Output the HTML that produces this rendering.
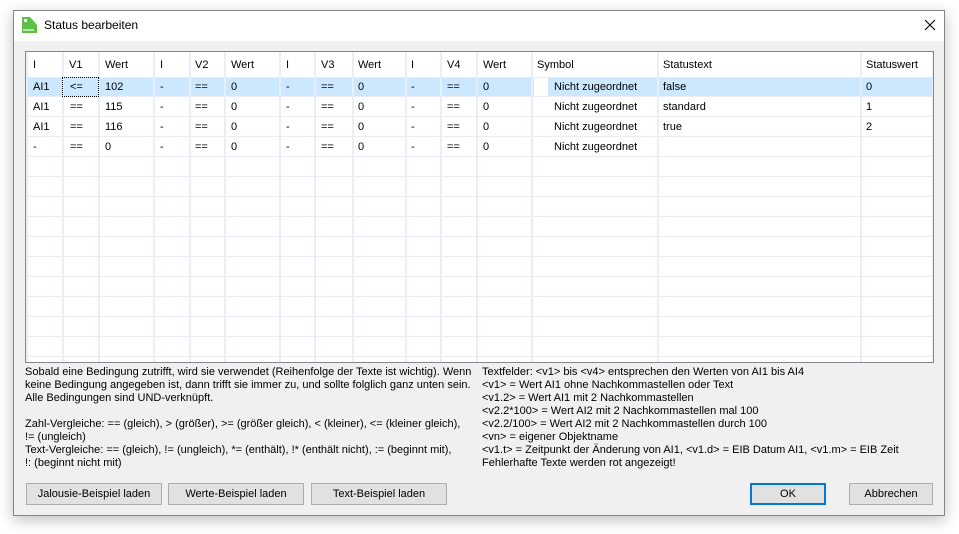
<!DOCTYPE html>
<html><head><meta charset="utf-8"><style>
*{margin:0;padding:0;box-sizing:border-box}
body{width:959px;height:534px;background:#fff;position:relative;overflow:hidden;font-family:"Liberation Sans",sans-serif;font-size:11px;color:#000}
.win{position:absolute;left:13px;top:10px;width:932px;height:506px;background:#f0f0f0;border:1px solid #868686;box-shadow:0 4px 14px rgba(0,0,0,.25)}
.title{position:absolute;left:0;top:0;width:930px;height:30px;background:#fff}
.title span{position:absolute;left:30px;top:7px;font-size:12px}
.grid{position:absolute;left:11px;top:40px;width:909px;height:312px;border:1px solid #828790;background:#fff;overflow:hidden}
.h{position:absolute;left:1px;right:0;height:1px;background:#eaeef4}
.v{position:absolute;top:0;bottom:0;width:2px;background:#e9eff8}
.sel{position:absolute;left:1px;width:906px;top:25px;height:19px;background:#cce8ff}
.t{position:absolute;white-space:nowrap;line-height:13px}
.btn{position:absolute;top:472px;height:22px;background:#e1e1e1;border:1px solid #adadad;text-align:center;line-height:20px}
.txt{position:absolute;line-height:13px;white-space:nowrap}
</style></head><body>
<div class="win">
<div class="title">
<svg style="position:absolute;left:8px;top:6px" width="15" height="16" viewBox="0 0 15 16"><path d="M0 0H8L15 8V16H0Z" fill="#5dbf46"/><rect x="2" y="2" width="3" height="3" fill="#fff"/><rect x="1" y="12" width="11" height="2" fill="#b8e3ae"/></svg>
<span>Status bearbeiten</span>
<svg style="position:absolute;left:910px;top:8px" width="12" height="12" viewBox="0 0 12 12"><path d="M1 1L11 11M11 1L1 11" stroke="#000" stroke-width="1.1"/></svg>
</div>
<div class="grid" id="g">
<div class="sel"></div>
<div class="h" style="top:25px"></div><div class="h" style="top:44px"></div><div class="h" style="top:64px"></div><div class="h" style="top:84px"></div><div class="h" style="top:104px"></div><div class="h" style="top:124px"></div><div class="h" style="top:144px"></div><div class="h" style="top:164px"></div><div class="h" style="top:184px"></div><div class="h" style="top:204px"></div><div class="h" style="top:224px"></div><div class="h" style="top:244px"></div><div class="h" style="top:264px"></div><div class="h" style="top:284px"></div><div class="h" style="top:304px"></div>
<div class="v" style="left:0"></div><div class="v" style="left:36px"></div><div class="v" style="left:72px"></div><div class="v" style="left:127px"></div><div class="v" style="left:163px"></div><div class="v" style="left:198px"></div><div class="v" style="left:253px"></div><div class="v" style="left:288px"></div><div class="v" style="left:326px"></div><div class="v" style="left:379px"></div><div class="v" style="left:414px"></div><div class="v" style="left:450px"></div><div class="v" style="left:505px"></div><div class="v" style="left:631px"></div><div class="v" style="left:834px"></div><div class="v" style="left:906px"></div>
<div style="position:absolute;left:508px;top:26px;width:14px;height:18px;background:#fff"></div>
<div style="position:absolute;left:36px;top:25px;width:37px;height:20px;border:1px dotted #000"></div>
</div>
<div class="txt" style="left:11px;top:355px">Sobald eine Bedingung zutrifft, wird sie verwendet (Reihenfolge der Texte ist wichtig). Wenn<br>keine Bedingung angegeben ist, dann trifft sie immer zu, und sollte folglich ganz unten sein.<br>Alle Bedingungen sind UND-verknüpft.<br><br>Zahl-Vergleiche: == (gleich), &gt; (größer), &gt;= (größer gleich), &lt; (kleiner), &lt;= (kleiner gleich),<br>!= (ungleich)<br>Text-Vergleiche: == (gleich), != (ungleich), *= (enthält), !* (enthält nicht), := (beginnt mit),<br>!: (beginnt nicht mit)</div>
<div class="txt" style="left:468px;top:355px">Textfelder: &lt;v1&gt; bis &lt;v4&gt; entsprechen den Werten von AI1 bis AI4<br>&lt;v1&gt; = Wert AI1 ohne Nachkommastellen oder Text<br>&lt;v1.2&gt; = Wert AI1 mit 2 Nachkommastellen<br>&lt;v2.2*100&gt; = Wert AI2 mit 2 Nachkommastellen mal 100<br>&lt;v2.2/100&gt; = Wert AI2 mit 2 Nachkommastellen durch 100<br>&lt;vn&gt; = eigener Objektname<br>&lt;v1.t&gt; = Zeitpunkt der Änderung von AI1, &lt;v1.d&gt; = EIB Datum AI1, &lt;v1.m&gt; = EIB Zeit<br>Fehlerhafte Texte werden rot angezeigt!</div>
<div class="btn" style="left:12px;width:136px">Jalousie-Beispiel laden</div>
<div class="btn" style="left:154px;width:136px">Werte-Beispiel laden</div>
<div class="btn" style="left:297px;width:136px">Text-Beispiel laden</div>
<div class="btn" style="left:736px;width:76px;border:2px solid #0078d7;line-height:18px">OK</div>
<div class="btn" style="left:835px;width:84px">Abbrechen</div>
</div>
<div style="position:absolute;left:0;top:0">
<div class="t" style="left:33px;top:59px">I</div><div class="t" style="left:69px;top:59px">V1</div><div class="t" style="left:105px;top:59px">Wert</div><div class="t" style="left:160px;top:59px">I</div><div class="t" style="left:195px;top:59px">V2</div><div class="t" style="left:231px;top:59px">Wert</div><div class="t" style="left:286px;top:59px">I</div><div class="t" style="left:321px;top:59px">V3</div><div class="t" style="left:358px;top:59px">Wert</div><div class="t" style="left:411px;top:59px">I</div><div class="t" style="left:447px;top:59px">V4</div><div class="t" style="left:483px;top:59px">Wert</div><div class="t" style="left:537px;top:59px">Symbol</div><div class="t" style="left:663px;top:59px">Statustext</div><div class="t" style="left:866px;top:59px">Statuswert</div>

<div class="t" style="left:33px;top:81px">AI1</div><div class="t" style="left:70px;top:81px">&lt;=</div><div class="t" style="left:105px;top:81px">102</div><div class="t" style="left:160px;top:81px">-</div><div class="t" style="left:195px;top:81px">==</div><div class="t" style="left:231px;top:81px">0</div><div class="t" style="left:286px;top:81px">-</div><div class="t" style="left:321px;top:81px">==</div><div class="t" style="left:358px;top:81px">0</div><div class="t" style="left:411px;top:81px">-</div><div class="t" style="left:447px;top:81px">==</div><div class="t" style="left:483px;top:81px">0</div><div class="t" style="left:554px;top:81px">Nicht zugeordnet</div><div class="t" style="left:663px;top:81px">false</div><div class="t" style="left:866px;top:81px">0</div>

<div class="t" style="left:33px;top:101px">AI1</div><div class="t" style="left:70px;top:101px">==</div><div class="t" style="left:105px;top:101px">115</div><div class="t" style="left:160px;top:101px">-</div><div class="t" style="left:195px;top:101px">==</div><div class="t" style="left:231px;top:101px">0</div><div class="t" style="left:286px;top:101px">-</div><div class="t" style="left:321px;top:101px">==</div><div class="t" style="left:358px;top:101px">0</div><div class="t" style="left:411px;top:101px">-</div><div class="t" style="left:447px;top:101px">==</div><div class="t" style="left:483px;top:101px">0</div><div class="t" style="left:554px;top:101px">Nicht zugeordnet</div><div class="t" style="left:663px;top:101px">standard</div><div class="t" style="left:866px;top:101px">1</div>

<div class="t" style="left:33px;top:121px">AI1</div><div class="t" style="left:70px;top:121px">==</div><div class="t" style="left:105px;top:121px">116</div><div class="t" style="left:160px;top:121px">-</div><div class="t" style="left:195px;top:121px">==</div><div class="t" style="left:231px;top:121px">0</div><div class="t" style="left:286px;top:121px">-</div><div class="t" style="left:321px;top:121px">==</div><div class="t" style="left:358px;top:121px">0</div><div class="t" style="left:411px;top:121px">-</div><div class="t" style="left:447px;top:121px">==</div><div class="t" style="left:483px;top:121px">0</div><div class="t" style="left:554px;top:121px">Nicht zugeordnet</div><div class="t" style="left:663px;top:121px">true</div><div class="t" style="left:866px;top:121px">2</div>

<div class="t" style="left:33px;top:141px">-</div><div class="t" style="left:70px;top:141px">==</div><div class="t" style="left:105px;top:141px">0</div><div class="t" style="left:160px;top:141px">-</div><div class="t" style="left:195px;top:141px">==</div><div class="t" style="left:231px;top:141px">0</div><div class="t" style="left:286px;top:141px">-</div><div class="t" style="left:321px;top:141px">==</div><div class="t" style="left:358px;top:141px">0</div><div class="t" style="left:411px;top:141px">-</div><div class="t" style="left:447px;top:141px">==</div><div class="t" style="left:483px;top:141px">0</div><div class="t" style="left:554px;top:141px">Nicht zugeordnet</div>
</div>
</body></html>
